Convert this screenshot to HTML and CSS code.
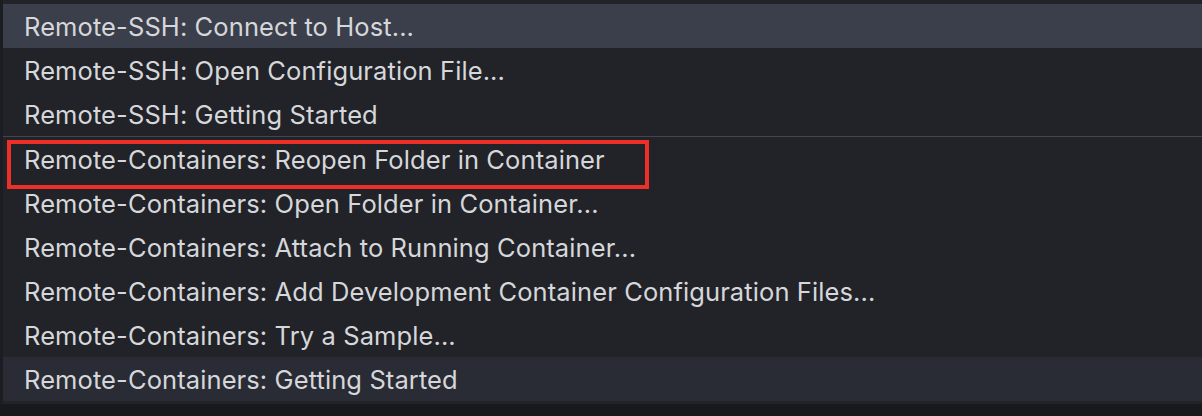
FILE: index.html
```html
<!DOCTYPE html>
<html>
<head>
<meta charset="utf-8">
<link rel="stylesheet" href="styles.css">
</head>
<body>
<div class="page">
  <div class="edge"></div>
  <div class="picker">
    <ul class="list">
      <li class="row active">Remote-SSH: Connect to Host...</li>
      <li class="row">Remote-SSH: Open Configuration File...</li>
      <li class="row">Remote-SSH: Getting Started</li>
      <li class="row sep marked">Remote-Containers: Reopen Folder in Container</li>
      <li class="row">Remote-Containers: Open Folder in Container...</li>
      <li class="row">Remote-Containers: Attach to Running Container...</li>
      <li class="row">Remote-Containers: Add Development Container Configuration Files...</li>
      <li class="row">Remote-Containers: Try a Sample...</li>
      <li class="row hover">Remote-Containers: Getting Started</li>
    </ul>
  </div>
</div>
</body>
</html>
```
FILE: styles.css
```css
html, body {
  margin: 0;
  padding: 0;
  background: #18191d;
  width: 1202px;
  height: 416px;
  overflow: hidden;
}
.page {
  display: flex;
  height: 404px;
}
.edge {
  width: 3px;
  background: #1b1d22;
}
.picker {
  flex: 1;
  background: #212328;
  padding: 4px 0 4px 0;
}
.list {
  list-style: none;
  margin: 0;
  padding: 0;
}
.row {
  height: 44px;
  display: flex;
  align-items: center;
  padding-left: 21px;
  font-family: Inter, "Noto Sans", sans-serif;
  font-size: 25.5px;
  letter-spacing: 0.1px;
  color: #d6d7da;
  box-sizing: border-box;
}
.row.active {
  background: #3b3f4b;
}
.row.hover {
  background: #292c35;
}
.row.sep {
  border-top: 1px solid #43464e;
  height: 45px;
}
.row.marked {
  position: relative;
}
.row.marked::before {
  content: "";
  position: absolute;
  left: 4px;
  top: 3px;
  width: 642px;
  height: 49px;
  box-sizing: border-box;
  border: 4px solid #ec2f27;
}
```
